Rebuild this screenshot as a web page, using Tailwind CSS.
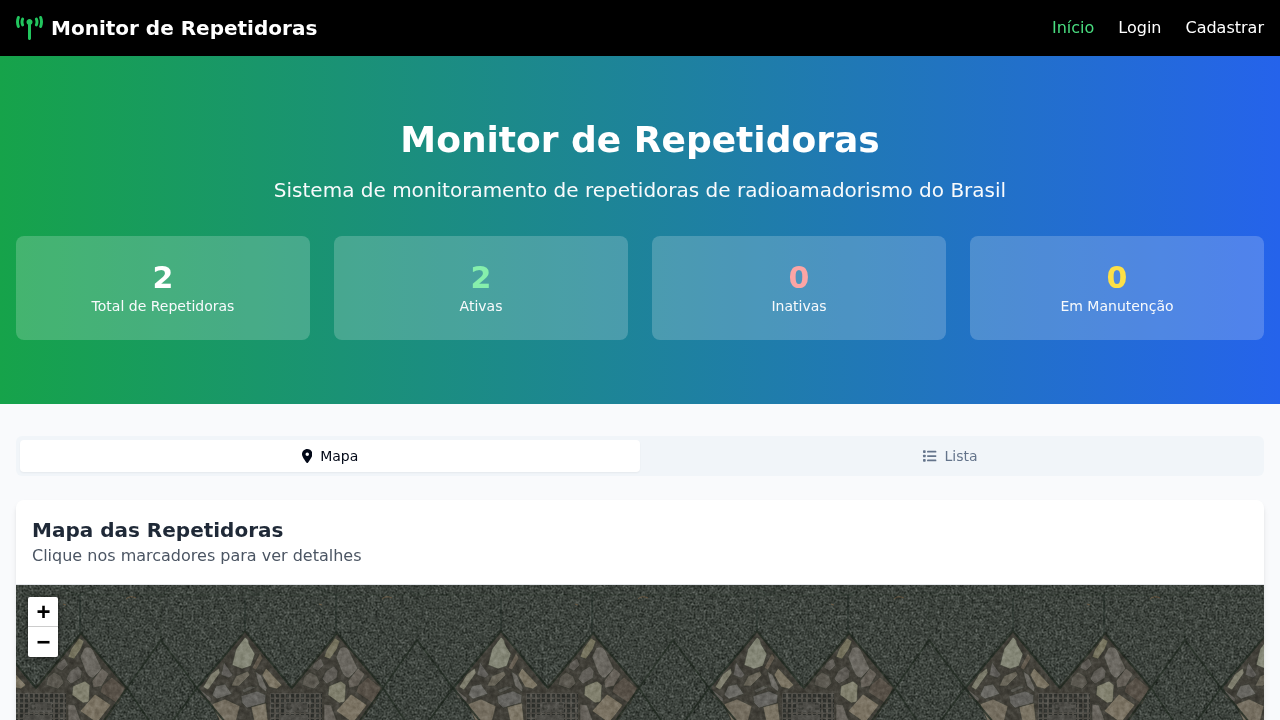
<!DOCTYPE html>
<html lang="pt-BR">
<head>
<meta charset="utf-8">
<title>Monitor de Repetidoras</title>
<script src="https://cdn.jsdelivr.net/npm/@tailwindcss/browser@4"></script>
</head>
<body class="flex h-screen flex-col overflow-hidden bg-[#f9fafc] font-['DejaVu_Sans',sans-serif] text-base">
<header class="flex h-14 shrink-0 items-center justify-between bg-black px-4 text-white">
  <div class="flex items-center gap-2">
    <svg class="h-6 w-[27px] text-[#22c55e]" viewBox="0 0 576 512" fill="currentColor">
      <path d="M80.300 44C69.800 69.900 64 98.200 64 128s5.800 58.100 16.300 84c6.600 16.400-1.300 35-17.700 41.700s-35-1.300-41.700-17.700C7.400 202.600 0 166.100 0 128S7.400 53.400 20.900 20C27.600 3.600 46.200-4.300 62.600 2.300S86.900 27.600 80.300 44zM555.100 20C568.600 53.400 576 89.900 576 128s-7.400 74.600-20.900 108c-6.600 16.400-25.300 24.300-41.700 17.700S489.100 228.400 495.700 212c10.500-25.900 16.300-54.200 16.300-84s-5.800-58.100-16.300-84C489.100 27.600 497 9 513.400 2.300s35 1.300 41.700 17.700zM352 128c0 23.700-12.900 44.400-32 55.400V480c0 17.700-14.300 32-32 32s-32-14.300-32-32V183.400c-19.100-11.100-32-31.700-32-55.400c0-35.300 28.700-64 64-64s64 28.700 64 64zM170.600 76.800C163.800 92.400 160 109.700 160 128s3.800 35.600 10.600 51.200c7.100 16.200-.3 35.100-16.500 42.100s-35.100-.3-42.100-16.500c-10.300-23.600-16-49.600-16-76.800s5.700-53.200 16-76.800c7.100-16.200 25.900-23.600 42.100-16.500s23.600 25.900 16.500 42.100zM464 51.200c10.300 23.600 16 49.600 16 76.800s-5.700 53.200-16 76.800c-7.100 16.200-25.900 23.600-42.100 16.500s-23.600-25.900-16.500-42.100c6.800-15.600 10.600-32.900 10.600-51.200s-3.800-35.600-10.600-51.200c-7.100-16.200 .3-35.100 16.500-42.100s35.100 .3 42.100 16.500z"/>
    </svg>
    <span class="text-xl font-bold">Monitor de Repetidoras</span>
  </div>
  <nav class="flex gap-6"><a class="text-[#4ade80]">Início</a><a>Login</a><a>Cadastrar</a></nav>
</header>
<section class="h-[348px] shrink-0 px-4 pt-16 text-center text-white" style="background:linear-gradient(to right,#16a34a,#2563eb)">
  <h1 class="text-4xl leading-10 font-bold">Monitor de Repetidoras</h1>
  <p class="mt-4 text-xl text-[#f8fafc]">Sistema de monitoramento de repetidoras de radioamadorismo do Brasil</p>
  <div class="mt-8 grid grid-cols-4 gap-6">
    <div class="h-26 rounded-lg bg-white/20 p-6"><div class="text-3xl font-bold">2</div><div class="text-sm text-[#f8fafc]">Total de Repetidoras</div></div>
    <div class="h-26 rounded-lg bg-white/20 p-6"><div class="text-3xl font-bold text-[#86efac]">2</div><div class="text-sm text-[#f8fafc]">Ativas</div></div>
    <div class="h-26 rounded-lg bg-white/20 p-6"><div class="text-3xl font-bold text-[#fca5a5]">0</div><div class="text-sm text-[#f8fafc]">Inativas</div></div>
    <div class="h-26 rounded-lg bg-white/20 p-6"><div class="text-3xl font-bold text-[#fde047]">0</div><div class="text-sm text-[#f8fafc]">Em Manutenção</div></div>
  </div>
</section>
<main class="min-h-0 flex-1 overflow-hidden px-4 pt-8">
  <div class="grid h-10 grid-cols-2 rounded-md bg-[#f1f5f9] p-1 text-sm">
    <div class="flex items-center justify-center rounded-sm bg-white text-[#020817] shadow-xs">
      <svg class="mr-2 h-3.5 w-[10.5px]" viewBox="0 0 384 512" fill="currentColor"><path d="M215.700 499.200C267 435 384 279.400 384 192C384 86 298 0 192 0S0 86 0 192c0 87.400 117 243 168.300 307.200c12.300 15.300 35.100 15.300 47.400 0zM192 128a64 64 0 1 1 0 128 64 64 0 1 1 0-128z"/></svg>Mapa
    </div>
    <div class="flex items-center justify-center text-[#64748b]">
      <svg class="mr-2 h-3.5 w-3.5 translate-x-[0.6px]" viewBox="0 0 512 512" fill="currentColor"><rect x="16" y="48" width="96" height="96" rx="24"/><rect x="16" y="208" width="96" height="96" rx="24"/><rect x="16" y="368" width="96" height="96" rx="24"/><rect x="160" y="64" width="352" height="64" rx="32"/><rect x="160" y="224" width="352" height="64" rx="32"/><rect x="160" y="384" width="352" height="64" rx="32"/></svg>Lista
    </div>
  </div>
  <div class="mt-6 h-[220px] overflow-hidden rounded-t-lg bg-white shadow-md">
    <div class="h-[85px] border-b border-gray-200 p-4">
      <h2 class="text-xl font-semibold text-[#1f2937]">Mapa das Repetidoras</h2>
      <p class="text-[#4b5563]">Clique nos marcadores para ver detalhes</p>
    </div>
    <div class="relative h-[135px] bg-[#3d4540]">
      <svg class="block h-[135px] w-[1248px]" viewBox="16 585 1248 135">
        <defs>
          <filter id="grain" x="0" y="0" width="100%" height="100%" color-interpolation-filters="sRGB">
            <feTurbulence type="fractalNoise" baseFrequency=".5" numOctaves="3" seed="8" result="n"/>
            <feColorMatrix in="n" type="matrix" values=".32 .2 0 0 -.022  .32 .2 0 0 .002  .32 .2 0 0 -.02  0 0 0 0 1"/>
          </filter>
          <filter id="wear" x="0" y="0" width="100%" height="100%" color-interpolation-filters="sRGB">
            <feTurbulence type="fractalNoise" baseFrequency=".2" numOctaves="4" seed="3"/>
            <feColorMatrix type="matrix" values="1 0 0 0 0  1 0 0 0 0  1 0 0 0 0  0 0 0 0 1"/>
          </filter>
          <pattern id="slots" x="14" y="693" width="5" height="5" patternUnits="userSpaceOnUse"><rect width="5" height="5" fill="#504e48"/><rect x="1" y="1" width="3" height="3.500" fill="#2f312d"/></pattern>
          <g id="tile">
            <path d="M81 633L127 688L104 724H-30L-57 688L-11 631L34 688Z" fill="#413f38"/>
            <g stroke="#36382f" stroke-width=".6">
              <path d="M79 638l5 3-3 8-7 10-6-2 3-8z" fill="#77745f"/>
              <path d="M84 648q6-3 9 2l9 19-9 9q-5 0-8-8l-5-13z" fill="#6b6861"/>
              <path d="M65 658l3 7-6 6-6-3 2-5z" fill="#5e5b55"/>
              <path d="M54 672l7 4 3 7-6 6-12-4 2-8z" fill="#5b5850"/>
              <path d="M70 671l8-5 4 5-1 7-10 6-5-5z" fill="#605d57"/>
              <path d="M102 668l7 6-7 12-9 2-1-7z" fill="#666159"/>
              <path d="M112 677l13 11-7 16-18-12 2-6z" fill="#575047"/>
              <path d="M73 686l12-5 5 4-1 17-6 1-11-8z" fill="#82816f"/>
              <path d="M95 694l16 11-14 18-17-12z" fill="#7a7262"/>
              <path d="M68 704l7 1 7 19H68z" fill="#68645d"/>
              <path d="M-11 637q4 2 4 7l6 10-4 12-9 3-10-4 4-16z" fill="#848676"/>
              <path d="M4 653l3 5-7 12-4-2z" fill="#645c50"/>
              <path d="M10 668l16 17-5 4-8-2-7-12z" fill="#7b7463"/>
              <path d="M-1 671l6 4 6 13-1 4-7-6z" fill="#6b6963"/>
              <path d="M-37 668l1 5-12 17-5-3 8-13z" fill="#7e7d6d"/>
              <path d="M-32 662l9 13-4 3-8-3z" fill="#605e5a"/>
              <path d="M-8 671l2 4-11 11-8 0 5-10z" fill="#6b675b"/>
              <path d="M-40 686l9-2 7 10-15 5-5-4z" fill="#696863"/>
              <path d="M-55 690l10 8 0 4-10-5z" fill="#625f5a"/>
              <path d="M-15 696l16-5 9 4-1 8-18 5-5-5z" fill="#64635f"/>
              <path d="M-44 704l13-5 15 7-4 16-16 0z" fill="#756e60"/>
              <path d="M-5 707l15-4 2 18H-2z" fill="#7c7565"/>
              <path d="M-14 690l9-4 6 1-13 6z" fill="#575650"/>
            </g>
            <path d="M14 693h52v30H14z" fill="url(#slots)"/>
            <path d="M28 702h24v10H28zM24 715h28v9H24z" fill="#4e4d48"/>
            <path d="M31 709v-5h4m-4 5h4v-2m6 2h2m4-5h4m-4 5h4" fill="none" stroke="#33342f"/>
            <g fill="none" stroke="#202920" stroke-width="2" opacity=".8"><path d="M-59 688L-11 631L36 688L81 633L127 688L103 722M-59 688L-31 722"/><path d="M127 688L161 640L197 688L172 722M127 688L150 722" stroke-width="1.800"/></g>
            <path d="M80 595V633M-11 598v33" fill="none" stroke="#222d26" stroke-width="1.500" opacity=".65"/>
            <path d="M161 595v45M16 595h256M50 585l30 10 20-10M146 585l15 10 17-10M240 585l16 10 15-10" fill="none" stroke="#222d26" stroke-width="1.200" opacity=".3"/>
            <path d="M126 599q4-4 10-1M63 604l3 1" fill="none" stroke="#775c3e" opacity=".7"/>
          </g>
        </defs>
        <rect x="16" y="585" width="1248" height="135" filter="url(#grain)"/>
        <use href="#tile"/><use href="#tile" x="256"/><use href="#tile" x="512"/><use href="#tile" x="768"/><use href="#tile" x="1024"/><use href="#tile" x="1280"/>
        <rect x="16" y="585" width="1248" height="135" filter="url(#wear)" style="mix-blend-mode:soft-light" opacity=".4"/>
      </svg>
      <div class="absolute top-3 left-3 w-[30px] overflow-hidden rounded-xs bg-white text-center font-['Liberation_Sans',sans-serif] font-bold text-black shadow-[0_1px_5px_rgba(0,0,0,0.65)]">
        <div class="h-[30px] border-b border-[#ccc] pl-px text-2xl leading-[30px]">+</div><div class="h-[30px] pl-px text-2xl leading-[30px]">−</div>
      </div>
    </div>
  </div>
</main>
</body>
</html>
